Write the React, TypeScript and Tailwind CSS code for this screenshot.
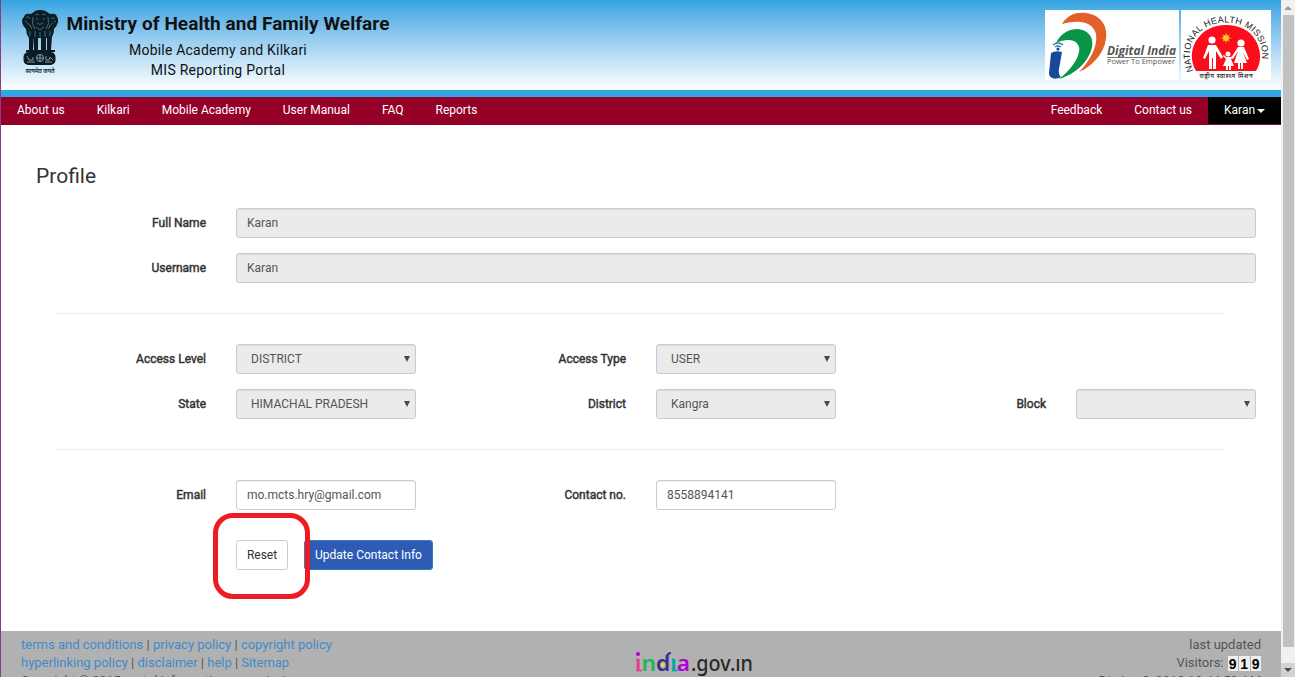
import React from "react";

function Emblem() {
  return (
    <svg width="40" height="66" viewBox="0 0 40 66" className="shrink-0">
      <g fill="#0c1c24">
        <path d="M14 3 Q15 1 20 1 Q25 1 27 3 Q29 5 31 5 Q36 4 37 8 Q39 10 38 13 Q37 17 34 20 Q34 26 31 29 H9 Q6 25 6 20 Q2 16 2 12 Q2 9 4 8 Q5 4 10 5 Q12 5 14 3Z" />
        <path d="M9 27h5l-1 14h-4zM14 27h4v15h-4zM21 27h5v15h-5zM27 27h5l-1 14h-4zM6 41h29v2h-29z" />
        <rect x="3.500" y="43" width="32" height="13" rx="5" />
      </g>
      <g fill="none" stroke="#4d8fb4" strokeWidth=".7">
        <path d="M15 6q2-2 4 0m3 0q2-2 4 0M16 10h2m5 0h2M17 14q3 3 6 0M6 9q2-3 4 1m21 0q2-3 4 0M7 14q3 1 5 6M33 14q-3 1-5 6M13 8q-2 7 2 12M28 8q2 7-2 12M16 18l4 3 4-3M10 22v5M15 22v6M20 23v5M25 22v6M30 22v5M5 12l2 1m27 0l2-1" />
      </g>
      <g fill="none" stroke="#80abc0" strokeWidth=".9">
        <circle cx="20" cy="49" r="3.500" /><path d="M20 45v8M16 49h8M7 47l2 4h4v-3m13-1v4h3l1-3 3 3M7 53h8m10 0h7" />
      </g>
      <text x="20" y="64" textAnchor="middle" fontSize="6" fontWeight="600" textLength="29" className="font-['Noto_Sans',sans-serif]" fill="#17313b">सत्यमेव जयते</text>
    </svg>
  );
}

function DigitalIndia() {
  return (
    <svg width="134" height="70" viewBox="0 0 134 70" className="bg-white">
      <path d="M17 14 C23 4 32 2 41 3 C56 5 63 16 61 29 C59 43 48 56 34 62 C45 51 53 36 51 24 C48 12 35 9 17 14Z" fill="#e4602b" />
      <path d="M11 33 C16 23 24 19 33 19 C43 20 49 27 47 37 C44 52 29 65 14 69 C26 60 36 46 34 37 C31 28 20 29 11 33Z" fill="#099548" />
      <path d="M6 43 Q11 40 17 42 L14 59 Q13 64 16 67 C11 70 4 69 4 63Z" fill="#174b99" />
      <circle cx="13" cy="39" r="1.6" fill="#174b99" />
      <path d="M8 35 Q13 31 18 35 M10 37 Q13 35 16 37" fill="none" stroke="#2d7eb8" strokeWidth="1.3" />
      <text x="62" y="45" fontSize="12" fontWeight="700" fontStyle="italic" textLength="69" lengthAdjust="spacingAndGlyphs" className="font-['Open_Sans',sans-serif]" fill="#555">Digital India</text>
      <path d="M62 47.500h69" stroke="#777" />
      <text x="62" y="54" fontSize="7" textLength="68" lengthAdjust="spacingAndGlyphs" className="font-['Open_Sans',sans-serif]" fill="#555">Power To Empower</text>
    </svg>
  );
}

function MissionLogo() {
  return (
    <svg width="90" height="70" viewBox="0 0 90 70" className="bg-white">
      <path d="M15 61 C9 51 10 39 15 31 C22 20 32 15 45 15 C58 15 69 20 75 31 C80 40 81 52 75 61Z" fill="#fc0d1b" />
      <path d="M12.500 61 C1 34 19 12.500 45 12.500 C71 12.500 89 34 77.500 61" id="arc" fill="none" />
      <text fontSize="9" fill="#222" className="font-['Liberation_Sans',sans-serif]"><textPath href="#arc" textLength="129" startOffset="0">NATIONAL HEALTH MISSION</textPath></text>
      <circle cx="45" cy="28" r="3" fill="#ffe600" />
      <path d="M45 23v10M40 28h10M41.500 24.500l7 7m0-7l-7 7" stroke="#ffc43b" strokeWidth=".8" />
      <g fill="#fff">
        <circle cx="31" cy="30" r="3.6" /><circle cx="60" cy="33" r="3.6" /><circle cx="47" cy="44" r="2.500" />
        <path d="M27 35h8l7 12-2 2-5-8v18h-3V48h-1v11h-3V41l-4 8-2-1zM57 37h6l5 12-2 1-4-8 4 11h-4v6h-2v-6h-1v6h-2v-6h-4l4-12-5 8-2-1zM45 47h5l4-3 1 1-5 4 3 7h-3v4h-2v-4h-1v4h-2v-4h-3l3-7-3-3 1-1z" />
      </g>
      <text x="45" y="67.500" textAnchor="middle" fontSize="6" fontWeight="600" textLength="53" className="font-['Noto_Sans',sans-serif]" fill="#333">राष्ट्रीय स्वास्थ्य मिशन</text>
    </svg>
  );
}

const control = "h-[30px] rounded-[3px] border border-[#ccc] px-[10px] text-[12px] leading-[28px] text-[#555] shadow-[inset_0_1px_1px_rgba(0,0,0,.075)]";
function Label({ children }: { children: React.ReactNode }) {
  return <label className="w-[150px] shrink-0 text-right text-[12px] leading-[30px] font-normal [-webkit-text-stroke:0.45px_#333]">{children}</label>;
}
function Select({ label, value = "" }: { label: string; value?: string }) {
  return (
    <div className="flex w-[360px] gap-[30px]">
      <Label>{label}</Label>
      <div className={control + " flex w-[180px] justify-between bg-[#ebebeb] pr-[5px] pl-[14px]"}>
        <span>{value}</span>
        <svg width="6" height="28" viewBox="0 0 6 28"><path d="M0 11h6l-3 6z" fill="#484848" /></svg>
      </div>
    </div>
  );
}
function Field({ label, value, wide = false }: { label: string; value: string; wide?: boolean }) {
  return (
    <div className={wide ? "flex gap-[30px]" : "flex w-[360px] gap-[30px]"}>
      <Label>{label}</Label>
      <div className={control + (wide ? " flex-1 bg-[#ebebeb]" : " w-[180px] bg-white")}>{value}</div>
    </div>
  );
}
function Link({ children }: { children: React.ReactNode }) {
  return <a className="text-[#428bca]">{children}</a>;
}

export default function App() {
  return (
    <div className="flex h-[677px] w-[1295px] overflow-hidden bg-white font-[Roboto,sans-serif] text-[12px] text-[#333]">
      <div className="flex w-[1281px] shrink-0 flex-col border-l border-[#883d80]">
        <header className="flex h-[97px] shrink-0 justify-between border-b-[7px] border-[#32a5e2] bg-gradient-to-b from-[#30a4e1] to-white pr-[10px] pl-[19px]">
          <div className="flex pt-[9px]">
            <Emblem />
            <div className="ml-[4px] w-[328px] pt-[2px] text-center text-[#111]">
              <h1 className="text-[19px] leading-[26px] font-bold tracking-[.06px] whitespace-nowrap">Ministry of Health and Family Welfare</h1>
              <p className="pr-[20px] text-[14px] leading-[26px] tracking-[.2px]">Mobile Academy and Kilkari</p>
              <p className="pr-[20px] text-[14px] leading-[15px] tracking-[.25px]">MIS Reporting Portal</p>
            </div>
          </div>
          <div className="flex gap-[2px] pt-[10px]"><DigitalIndia /><MissionLogo /></div>
        </header>
        <nav className="flex h-[28px] shrink-0 bg-[#950029] pl-[16px] text-[12px] leading-[26px] text-white">
          <div className="flex flex-1 gap-[31.97px]">
            <a>About us</a><a>Kilkari</a><a>Mobile Academy</a><a>User Manual</a><a>FAQ</a><a>Reports</a>
          </div>
          <div className="flex gap-[32px] pr-[16px]"><a>Feedback</a><a>Contact us</a></div>
          <div className="flex h-[27px] w-[73px] items-start bg-black pl-[16px] leading-[26px]">
            <span>Karan</span><svg width="8" height="4" viewBox="0 0 8 4" className="mt-[12px] ml-[2px]"><path d="M0 0h8L4 4z" fill="white" /></svg>
          </div>
        </nav>
        <main className="flex h-[506px] shrink-0 flex-col pr-[25px] pl-[35px]">
          <h2 className="pt-[38px] text-[21px] leading-[26px]">Profile</h2>
          <div className="mt-[19px] flex flex-col gap-[15px] pl-[20px]">
            <Field label="Full Name" value="Karan" wide />
            <Field label="Username" value="Karan" wide />
          </div>
          <hr className="mt-[30px] mr-[30px] ml-[20px] border-[#eee]" />
          <div className="mt-[30px] grid grid-cols-[360px_360px_360px] gap-x-[60px] gap-y-[15px] pl-[20px]">
            <Select label="Access Level" value="DISTRICT" /><Select label="Access Type" value="USER" /><div />
            <Select label="State" value="HIMACHAL PRADESH" /><Select label="District" value="Kangra" /><Select label="Block" />
          </div>
          <hr className="mt-[30px] mr-[30px] ml-[20px] border-[#eee]" />
          <div className="mt-[30px] flex gap-[60px] pl-[20px]">
            <Field label="Email" value="mo.mcts.hry@gmail.com" /><Field label="Contact no." value="8558894141" />
          </div>
          <div className="relative mt-[30px] flex gap-[16px] pl-[200px]">
            <button className="h-[30px] w-[52px] rounded-[3px] border border-[#ccc] bg-white text-[12px]">Reset</button>
            <button className="h-[30px] w-[129px] rounded-[3px] border border-[#357ebd] bg-[#2e5cb5] text-[12px] text-white">Update Contact Info</button>
            <div className="absolute top-[-27px] left-[177px] h-[86px] w-[97px] rounded-[20px] border-[5px] border-[#ed1c24]" />
          </div>
        </main>
        <footer className="grid h-[46px] grid-cols-3 overflow-hidden bg-[#b1b1b1] px-[20px] pt-[5px] text-[13px] leading-[18px] text-[#555]">
          <div className="whitespace-nowrap">
            <p><Link>terms and conditions</Link> | <Link>privacy policy</Link> | <Link>copyright policy</Link></p>
            <p><Link>hyperlinking policy</Link> | <Link>disclaimer</Link> | <Link>help</Link> | <Link>Sitemap</Link></p>
            <p className="tracking-[-.1px]">Copyright © 2015 portal information commission</p>
          </div>
          <svg width="120" height="46" viewBox="0 0 120 46" className="ml-[201px]">
            <g className="font-['Noto_Sans',sans-serif]" fontSize="21" fontWeight="500">
              <text y="35" x="0" textLength="55" lengthAdjust="spacingAndGlyphs" fontWeight="600"><tspan fill="#e63b97">ı</tspan><tspan fill="#20b65b">n</tspan><tspan fill="#333192">d</tspan><tspan fill="#00a99d">ı</tspan><tspan fill="#ae00d5">a</tspan></text>
              <text y="35" x="56" fill="#292929" textLength="62" lengthAdjust="spacingAndGlyphs">.gov.ın</text>
            </g>
            <path d="M1 23.500h3M1 34.500h6" stroke="#e63b97" strokeWidth="1.500" /><path d="M37 23.500h3M37 34.500h6" stroke="#00a99d" strokeWidth="1.500" />
            <path d="M32 20q1-3 4-3" fill="none" stroke="#333192" strokeWidth="2" />
            <circle cx="3" cy="18" r="2" fill="#ae00d5" /><circle cx="27.500" cy="29" r="2" fill="#ffd32c" />
          </svg>
          <div className="text-right">
            <p>last updated</p>
            <p className="flex justify-end gap-[4px]">Visitors: <span className="mt-[2px] flex h-[15px] gap-px font-['Liberation_Sans',sans-serif] text-[14px] leading-[16px] font-bold text-black">{["9", "1", "9"].map((n, i) => <b key={i} className="w-[10.5px] bg-[#eee] text-center">{n}</b>)}</span></p>
            <p>Dt: Jan 8, 2018 12:44:59 AM</p>
          </div>
        </footer>
      </div>
      <aside className="flex w-[14px] flex-col items-center bg-[#f1f1f1]">
        <div className="flex h-[15px] items-center"><svg width="8" height="4" viewBox="0 0 8 4"><path d="M0 4h8L4 0z" fill="#999" /></svg></div>
        <div className="mr-[-1px] h-[632px] w-[11px] bg-[#c1c1c1]" />
        <div className="mt-[16px] flex h-[14px] w-full items-center justify-center bg-[#d2d2d2]"><svg width="8" height="4" viewBox="0 0 8 4"><path d="M0 0h8L4 4z" fill="#505050" /></svg></div>
      </aside>
    </div>
  );
}
